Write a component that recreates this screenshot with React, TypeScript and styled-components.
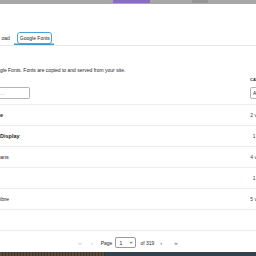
import { FC } from 'react';
import styled, { createGlobalStyle } from 'styled-components';

const GlobalStyle = createGlobalStyle`
  html, body {
    margin: 0;
    padding: 0;
    background: #fff;
    overflow: hidden;
  }
  body {
    font-family: "Liberation Sans", Arial, sans-serif;
    color: #1e1e1e;
  }
`;

const Screen = styled.div`
  width: 256px;
  height: 256px;
  overflow: hidden;
  display: flex;
  flex-direction: column;
  background: #fff;
`;

const Overlay = styled.div`
  height: 4px;
  flex-shrink: 0;
  background: #a7a7a7;
  display: flex;
  align-items: flex-start;
  padding-left: 113px;
  gap: 42px;
`;

const OverlayChip = styled.div<{ $color: string; $w: number }>`
  width: ${(p) => p.$w}px;
  height: 3px;
  background: ${(p) => p.$color};
`;

const TabBar = styled.div`
  margin-top: 26px;
  height: 15px;
  display: flex;
  border-bottom: 1px solid #e6e6e6;
  flex-shrink: 0;
`;

const Tab = styled.div<{ $active?: boolean }>`
  display: flex;
  align-items: center;
  padding: 0 3px 0 ${(p) => (p.$active ? 4 : 0)}px;
  font-size: 5px;
  color: #1e1e1e;
  box-shadow: ${(p) => (p.$active ? 'inset 0 -1.5px 0 #3c9ad3' : 'none')};
`;

const TabLabel = styled.span<{ $focus?: boolean }>`
  padding: 2px 1.5px;
  border-radius: 2px;
  outline: ${(p) => (p.$focus ? '1px solid #4aa3d6' : 'none')};
  line-height: 6px;
`;

const Description = styled.p`
  margin: 21px 0 0;
  font-size: 5px;
  line-height: 7px;
  white-space: nowrap;
`;

const FilterRow = styled.div`
  margin-top: 3px;
  width: 282px;
  display: flex;
  justify-content: space-between;
  align-items: flex-end;
  padding-bottom: 5px;
  border-bottom: 1px solid #ececec;
  flex-shrink: 0;
`;

const SearchBox = styled.div`
  width: 32px;
  height: 12px;
  margin-left: -2px;
  box-sizing: border-box;
  border: 1px solid #b4b4b4;
  border-left: none;
  border-radius: 0 2px 2px 0;
  font-size: 5px;
  color: #8a8a8a;
  display: flex;
  align-items: center;
  padding-left: 2px;
`;

const CategoryGroup = styled.div`
  width: 32px;
  display: flex;
  flex-direction: column;
  gap: 4px;
`;

const SmallLabel = styled.div`
  font-size: 4px;
  line-height: 6px;
  text-transform: uppercase;
  font-weight: 600;
`;

const SelectBox = styled.div`
  height: 12px;
  box-sizing: border-box;
  border: 1px solid #b4b4b4;
  border-radius: 2px;
  font-size: 5px;
  display: flex;
  align-items: center;
  padding-left: 2px;
`;

/* wider than the window: the variant counts run off the right edge */
const FontList = styled.div`
  width: 272px;
  display: flex;
  flex-direction: column;
`;

const FontRow = styled.div`
  height: 21px;
  box-sizing: border-box;
  border-bottom: 1px solid #ececec;
  display: flex;
  align-items: center;
  justify-content: space-between;
`;

const FontName = styled.span<{ $bold?: boolean }>`
  font-size: 5.5px;
  font-weight: ${(p) => (p.$bold ? 700 : 400)};
  white-space: nowrap;
`;

const Variants = styled.span`
  font-size: 5px;
  color: #3c3c3c;
  white-space: nowrap;
`;

const Pagination = styled.div`
  margin-top: 6px;
  height: 11px;
  display: flex;
  align-items: center;
  justify-content: center;
  font-size: 5px;
  flex-shrink: 0;
`;

const PageArrow = styled.span<{ $disabled?: boolean; $gap: number }>`
  color: ${(p) => (p.$disabled ? '#c4c4c4' : '#5a5a5a')};
  margin-right: ${(p) => p.$gap}px;
  font-size: 6px;
`;

const PageText = styled.span<{ $gap: number }>`
  margin-right: ${(p) => p.$gap}px;
  color: #2a2a2a;
`;

const PageSelect = styled.div`
  width: 21px;
  height: 11px;
  box-sizing: border-box;
  border: 1px solid #9a9a9a;
  border-radius: 2px;
  margin-right: 4px;
  display: flex;
  align-items: center;
  justify-content: space-between;
  padding: 0 2px 0 3px;
`;

const BottomStrip = styled.div`
  margin-top: auto;
  height: 4px;
  display: flex;
  flex-shrink: 0;
`;

const StripPart = styled.div<{ $w?: number; $bg: string }>`
  width: ${(p) => (p.$w ? `${p.$w}px` : 'auto')};
  flex: ${(p) => (p.$w ? '0 0 auto' : '1')};
  background: ${(p) => p.$bg};
`;

const fonts = [
  { name: 'e', variants: '2 variants', bold: true },
  { name: 'Display', variants: '1 variant', bold: true },
  { name: 'ans', variants: '4 variants' },
  { name: '', variants: '1 variant' },
  { name: 'ibre', variants: '5 variants' },
  { name: '', variants: '' },
];

const App: FC = () => {
  return (
    <Screen>
      <GlobalStyle />
      <Overlay>
        <OverlayChip $color="#8a6cc4" $w={37} />
        <OverlayChip $color="#959595" $w={16} />
      </Overlay>

      <TabBar>
        <Tab>
          <TabLabel>oad</TabLabel>
        </Tab>
        <Tab $active>
          <TabLabel $focus>Google Fonts</TabLabel>
        </Tab>
      </TabBar>

      <Description>gle Fonts. Fonts are copied to and served from your site.</Description>

      <FilterRow>
        <SearchBox>…</SearchBox>
        <CategoryGroup>
          <SmallLabel>Categories</SmallLabel>
          <SelectBox>All</SelectBox>
        </CategoryGroup>
      </FilterRow>

      <FontList>
        {fonts.map((f, i) => (
          <FontRow key={i}>
            <FontName $bold={f.bold}>{f.name}</FontName>
            <Variants>{f.variants}</Variants>
          </FontRow>
        ))}
      </FontList>

      <Pagination>
        <PageArrow $disabled $gap={9}>«</PageArrow>
        <PageArrow $disabled $gap={8}>‹</PageArrow>
        <PageText $gap={3}>Page</PageText>
        <PageSelect>
          <span>1</span>
          <svg width="4" height="3" viewBox="0 0 8 5">
            <path d="M1 1l3 3 3-3" fill="none" stroke="#1e1e1e" strokeWidth="1.4" />
          </svg>
        </PageSelect>
        <PageText $gap={6}>of 319</PageText>
        <PageArrow $gap={12}>›</PageArrow>
        <PageArrow $gap={0}>»</PageArrow>
      </Pagination>

      <BottomStrip>
        <StripPart $w={105} $bg="repeating-linear-gradient(90deg, #5a4a3c 0 2px, #3b322b 2px 3px)" />
        <StripPart $bg="#34424e" />
      </BottomStrip>
    </Screen>
  );
};

export default App;
